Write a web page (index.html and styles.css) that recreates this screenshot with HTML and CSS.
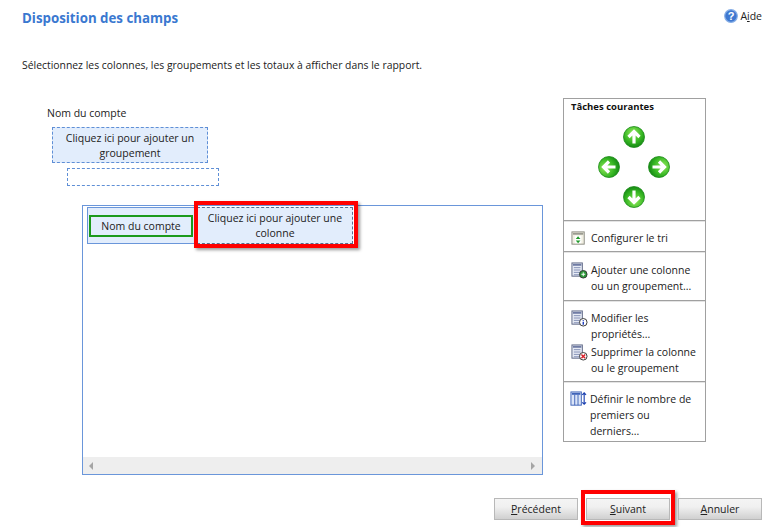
FILE: index.html
```html
<!DOCTYPE html>
<html lang="fr">
<head>
<meta charset="utf-8">
<title>Disposition des champs</title>
<link rel="stylesheet" href="styles.css">
</head>
<body>
<svg class="defs" width="0" height="0">
  <defs>
    <radialGradient id="g" cx="45%" cy="30%" r="75%">
      <stop offset="0" stop-color="#8fe85a"/><stop offset="0.6" stop-color="#35b522"/><stop offset="1" stop-color="#0f8012"/>
    </radialGradient>
    <symbol id="arrow" viewBox="0 0 22 22">
      <circle cx="11" cy="11" r="10.500" fill="url(#g)" stroke="#1a8a18" stroke-width="0.800"/>
      <path d="M11 17.500V6M5.500 11L11 5.500L16.500 11" fill="none" stroke="#fff" stroke-width="3.200"/>
    </symbol>
    <symbol id="doc" viewBox="0 0 18 18">
      <rect x="1" y="1" width="11" height="14" fill="#e6eaf4" stroke="#5c6584"/>
      <path d="M2 2h9v2H2z" fill="#6f7ba4"/>
      <path d="M3 6h7M3 8.500h7M3 11h7M3 13.500h7" stroke="#7f8cb4"/>
    </symbol>
  </defs>
</svg>
<header class="head">
  <h1 class="title">Disposition des champs</h1>
  <a class="help">
    <svg class="help-icon" viewBox="0 0 14 14" width="14" height="14"><circle cx="7" cy="7" r="6.300" fill="#3f78d0" stroke="#86aee6" stroke-width="1.200"/><text x="7" y="10.500" class="q">?</text></svg>
    <span>A<u>i</u>de</span>
  </a>
</header>
<p class="intro">Sélectionnez les colonnes, les groupements et les totaux à afficher dans le rapport.</p>
<main class="content">
  <section class="designer">
    <div class="group-label">Nom du compte</div>
    <div class="add-group">Cliquez ici pour ajouter un groupement</div>
    <div class="empty-slot"></div>
    <div class="grid">
      <div class="cols">
        <div class="col-row">
          <div class="col-cell">Nom du compte</div>
        </div>
        <div class="add-col">Cliquez ici pour ajouter une colonne</div>
      </div>
      <div class="scrollbar">
        <span class="tri-left"></span>
        <span class="tri-right"></span>
      </div>
    </div>
  </section>
  <aside class="tasks">
    <div class="sec sec-top">
      <div class="tasks-title">Tâches courantes</div>
      <div class="pad">
        <svg class="ar up"><use href="#arrow"/></svg>
        <svg class="ar left"><use href="#arrow"/></svg>
        <svg class="ar right"><use href="#arrow"/></svg>
        <svg class="ar down"><use href="#arrow"/></svg>
      </div>
    </div>
    <div class="sec sec-sort">
      <div class="task">
        <svg class="ico" viewBox="0 0 18 18"><rect x="1" y="2" width="13" height="13" fill="#f1efe2" stroke="#8a8a80"/><path d="M2 3h11v2H2z" fill="#9a9a90"/><rect x="4" y="6" width="7" height="8" fill="#fff"/><path d="M7.500 6.500L10 9.500H5zM7.500 14L5 11h5z" fill="#1f9a2a"/></svg>
        <span>Configurer le tri</span>
      </div>
    </div>
    <div class="sec sec-add">
      <div class="task">
        <svg class="ico" viewBox="0 0 18 18"><use href="#doc"/><circle cx="13" cy="13" r="4" fill="#2d9b3a" stroke="#333"/><path d="M11 13h4M13 11v4" stroke="#fff"/></svg>
        <span>Ajouter une colonne ou un groupement...</span>
      </div>
    </div>
    <div class="sec sec-edit">
      <div class="task">
        <svg class="ico" viewBox="0 0 18 18"><use href="#doc"/><circle cx="13" cy="13" r="4" fill="#fff" stroke="#333"/><path d="M13 10.500v1M13 12.500v3" stroke="#1f3fc0" stroke-width="1.500"/></svg>
        <span>Modifier les propriétés...</span>
      </div>
      <div class="task">
        <svg class="ico" viewBox="0 0 18 18"><use href="#doc"/><circle cx="13" cy="13" r="4" fill="#fff" stroke="#333"/><path d="M11 11l4 4M15 11l-4 4" stroke="#d8202a" stroke-width="1.500"/></svg>
        <span>Supprimer la colonne ou le groupement</span>
      </div>
    </div>
    <div class="sec sec-top-n">
      <div class="task">
        <svg class="ico" viewBox="0 0 18 18"><rect x="1" y="1" width="11" height="14" fill="#dbe5f8" stroke="#3f63b8"/><path d="M2 2h9v2H2z" fill="#3f63b8"/><path d="M5 4v11M8.500 4v11" stroke="#3f63b8"/><path d="M15 2v12M13 4l2-2 2 2M13 12l2 2 2-2" fill="none" stroke="#1a3fb0" stroke-width="1.200"/></svg>
        <span>Définir le nombre de premiers ou derniers...</span>
      </div>
    </div>
  </aside>
</main>
<footer class="foot">
  <button class="btn" type="button"><u>P</u>récédent</button>
  <button class="btn btn-next" type="button"><u>S</u>uivant</button>
  <button class="btn" type="button"><u>A</u>nnuler</button>
</footer>
</body>
</html>
```
FILE: styles.css
```css
* { box-sizing: border-box; }
html, body { margin: 0; padding: 0; }
body {
  width: 782px; height: 527px; overflow: hidden; background: #fff;
  font-family: "Open Sans", "Noto Sans", "Liberation Sans", sans-serif;
  font-size: 10.5px; color: #222; line-height: 16px;
}
.defs { position: absolute; }
.head { display: flex; justify-content: space-between; align-items: center; height: 26px; padding: 10px 20px 0 22px; }
.title { margin: 0; font-size: 13.3px; font-weight: 700; color: #3a78d0; line-height: 16px; }
.help { display: flex; align-items: center; gap: 2px; font-size: 10.5px; margin-top: -4px; }
.help-icon { display: block; }
.q { font: 700 11px "Liberation Sans", sans-serif; fill: #fff; text-anchor: middle; }
.intro { margin: 31px 0 0 22px; height: 16px; font-size: 10.4px; }
.content { display: flex; margin-top: 25px; height: 385px; }
.designer { width: 563px; padding: 0 0 0 47px; display: flex; flex-direction: column; align-items: flex-start; }
.group-label { margin-top: 7px; height: 16px; }
.add-group {
  margin: 6px 0 0 5px; width: 156px; height: 36px; padding: 3px 8px 0; line-height: 15px;
  background: #e2edfc; border: 1px dashed #5f8fd6; text-align: center;
}
.empty-slot { margin: 5px 0 0 20px; width: 152px; height: 18px; border: 1px dashed #5f8fd6; }
.grid {
  margin: 19px 0 0 35px; width: 461px; height: 270px; border: 1px solid #6a96da;
  display: flex; flex-direction: column; justify-content: space-between;
}
.cols { display: flex; padding: 1px 0 0 4px; }
.col-row {
  width: 110px; height: 37px; background: #e2edfc; border: 1px solid #6a96da;
  padding: 7px 0 0 1px;
}
.col-cell {
  width: 104px; height: 22px; border: 2px solid #1c9a1c; text-align: center; line-height: 18px;
}
.add-col {
  position: relative; width: 156px; height: 37px; padding: 3px 8px 0; line-height: 15px;
  background: #e2edfc; border: 1px dashed #5a6f90; text-align: center;
}
.add-col::after, .btn-next::after {
  content: ""; position: absolute; border: 4px solid #f00; box-shadow: 2px 2px 3px rgba(0,0,0,.4);
}
.add-col::after { inset: -7px -6px -5px -4px; }
.scrollbar {
  height: 17px; background: #eee; display: flex; justify-content: space-between;
  align-items: center; padding: 0 7px 0 6px;
}
.tri-left, .tri-right { width: 0; height: 0; border: 4px solid transparent; }
.tri-left { border-left: 0; border-right: 4px solid #a5a5a5; }
.tri-right { border-right: 0; border-left: 4px solid #a5a5a5; }
.tasks { width: 143px; height: 344px; border: 1px solid #a0a0a0; display: flex; flex-direction: column; }
.sec { border-top: 1px solid #a0a0a0; box-shadow: inset 0 1px #e4e4e4; padding: 0 7px; }
.sec-top { border-top: 0; box-shadow: none; height: 122px; }
.sec-sort { height: 31px; padding-top: 9px; }
.sec-add { height: 49px; padding-top: 10px; }
.sec-edit { height: 82px; padding-top: 9px; }
.sec-top-n { flex: 1; padding: 9px 6px 0; }
.tasks-title { font-size: 9.5px; font-weight: 700; color: #111; }
.pad {
  margin: 7px 0 0 0; width: 126px; padding: 0 25px; height: 90px; display: grid;
  grid-template: 1fr 1fr 1fr / 1fr 1fr 1fr; justify-items: center; align-items: center;
}
.ar { width: 22px; height: 22px; }
.up { grid-area: 1 / 2; }
.left { grid-area: 2 / 1; transform: rotate(-90deg); }
.right { grid-area: 2 / 3; transform: rotate(90deg); }
.down { grid-area: 3 / 2; transform: rotate(180deg); }
.task { display: flex; gap: 3px; align-items: flex-start; margin-bottom: 2px; }
.ico { flex: none; width: 17px; height: 17px; }
.task span { display: block; width: 108px; }
.foot { display: flex; justify-content: flex-end; gap: 8px; padding: 15px 20px 0 0; }
.btn {
  position: relative; width: 84px; height: 22px; padding: 0; font: 500 10.5px "Open Sans", "Noto Sans", sans-serif; color: #222;
  border: 1px solid #b8b8b8; background: linear-gradient(#f4f4f4, #f0f0f0 40%, #d0d0d0);
}
.btn-next::after { inset: -9px -6px -6px -6px; }
```
